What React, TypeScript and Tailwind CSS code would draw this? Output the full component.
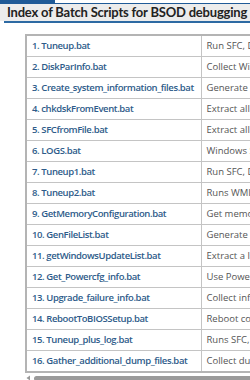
const rows: [string, string][] = [
  ["1. Tuneup.bat", "Run SFC, DISM and CHKDSK in one go"],
  ["2. DiskParInfo.bat", "Collect WinDiskPart partition info"],
  ["3. Create_system_information_files.bat", "Generate a system information file"],
  ["4. chkdskFromEvent.bat", "Extract all chkdsk results from event log"],
  ["5. SFCfromFile.bat", "Extract all SFC results from CBS log"],
  ["6. LOGS.bat", "Windows Startup and shutdown logs"],
  ["7. Tuneup1.bat", "Run SFC, DISM and CHKDSK"],
  ["8. Tuneup2.bat", "Runs WMIC commands"],
  ["9. GetMemoryConfiguration.bat", "Get memory configuration"],
  ["10. GenFileList.bat", "Generate a list of files"],
  ["11. getWindowsUpdateList.bat", "Extract a list of Windows updates"],
  ["12. Get_Powercfg_info.bat", "Use Powershell to get powercfg info"],
  ["13. Upgrade_failure_info.bat", "Collect information on upgrade failure"],
  ["14. RebootToBIOSSetup.bat", "Reboot computer to BIOS setup"],
  ["15. Tuneup_plus_log.bat", "Runs SFC, DISM with a log"],
  ["16. Gather_additional_dump_files.bat", "Collect dump files"],
];

export default function App() {
  return (
    <div className="w-[250px] h-[380px] overflow-hidden bg-white font-['Open_Sans',sans-serif]">
      <div className="flex h-[4px]">
        <div className="w-[55px] bg-[#1f5a97]" />
        <div className="flex-1 border-b border-[#1f5a97]" />
      </div>
      <h1 className="bg-[#ececec] h-[17px] pl-[7px] font-['Lato',sans-serif] text-[13px] leading-[17px] font-bold text-[#222] whitespace-nowrap tracking-[-0.2px]">
        Index of Batch Scripts for BSOD debugging
      </h1>
      <div className="ml-[4px] h-[2px] bg-[#2d6aa3]" />
      <div className="ml-[25px] mt-[11px] overflow-hidden">
        <table className="border-collapse border-2 border-[#b4b4b4] text-[9.5px] leading-[20px] w-[400px] table-fixed">
          <tbody>
            {rows.map(([name, desc]) => (
              <tr key={name} className="h-[20.8px]">
                <td className="w-[175px] border border-[#c4c4c4] pl-[5px] font-semibold text-[#2e5c8a] whitespace-nowrap tracking-[-0.4px]">
                  {name}
                </td>
                <td className="border border-[#c4c4c4] pl-[5px] text-[#555] whitespace-nowrap">
                  {desc}
                </td>
              </tr>
            ))}
          </tbody>
        </table>
      </div>
      <div className="ml-[26px] mt-[2px] flex items-center gap-[3px]">
        <svg width="5" height="6" viewBox="0 0 5 6">
          <path d="M4 0.5 L0.5 3 L4 5.5 Z" fill="#999" />
        </svg>
        <div className="flex-1 h-[5px] rounded-l-full bg-[#9a9a9a]" />
      </div>
    </div>
  );
}
